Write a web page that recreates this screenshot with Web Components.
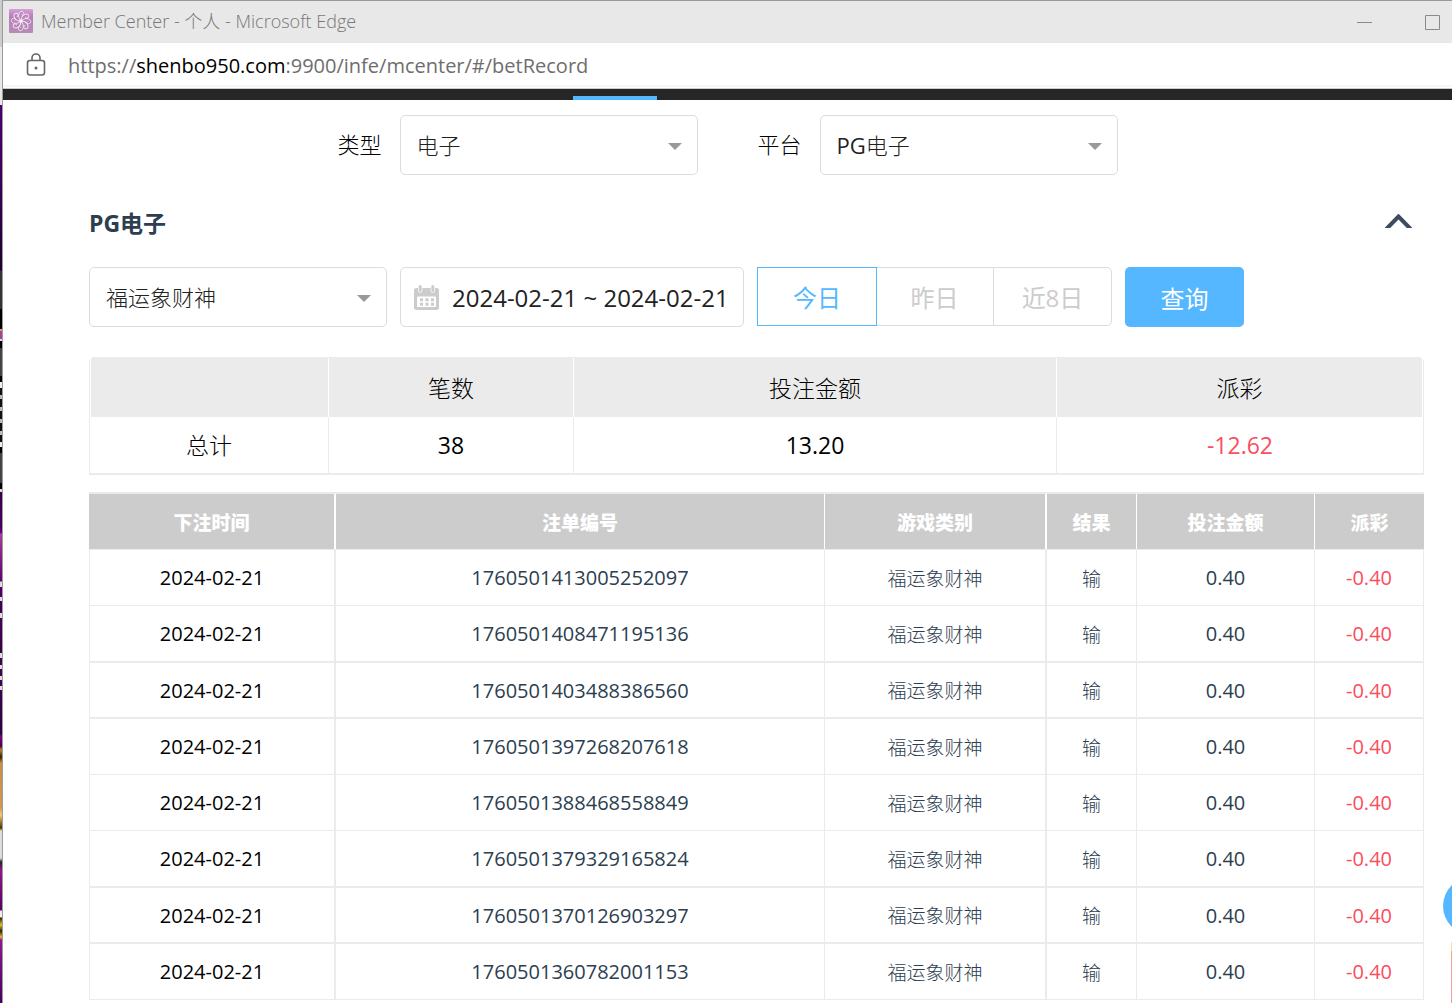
<!DOCTYPE html>
<html lang="zh-CN">
<head>
<meta charset="utf-8">
<title>Member Center</title>
<style>
    html, body {
        margin: 0;
        height: 100%;
        overflow: hidden;
    }
    body {
        font-family: "Open Sans", "Noto Sans CJK SC", sans-serif;
        color: #2c3e50;
        background: #fff;
        --blue: #54b7ff;
        --line: #dcdcdc;
        --cell: #ebebeb;
        --red: #fb4d5d;
        --thin: "Open Sans", "Noto Sans CJK SC Light", "Noto Sans CJK SC", sans-serif;
    }
</style>
</head>
<body>
<app-window>
    <title-bar slot="top">Member Center - 个人 - Microsoft Edge</title-bar>
    <address-bar slot="top" scheme="https://" host="shenbo950.com" path=":9900/infe/mcenter/#/betRecord"></address-bar>
    <nav-strip slot="top"></nav-strip>
    <filter-row align="center" gap="wide">
        <select-field label="类型" value="电子"></select-field>
        <select-field label="平台" value="PG电子"></select-field>
    </filter-row>
    <collapse-panel>
        <span slot="title">PG电子</span>
        <filter-row>
            <select-field value="福运象财神" name="游戏"></select-field>
            <date-range value="2024-02-21 ~ 2024-02-21"></date-range>
            <day-tabs days="今日,昨日,近8日"></day-tabs>
            <query-button>查询</query-button>
        </filter-row>
        <summary-table count="38" bet="13.20" payout="-12.62"></summary-table>
        <bet-table></bet-table>
    </collapse-panel>
    <float-service slot="float"></float-service>
</app-window>

<script>
class AppWindow extends HTMLElement {
    constructor() {
        super();
        const shadowRoot = this.attachShadow({ mode: 'open' });
        shadowRoot.innerHTML = `
        <style>
            :host {
                display: flex;
                position: relative;
                height: 100%;
                overflow: hidden;
            }
            .desktop {
                flex: none;
                width: 2px;
                background: linear-gradient(
                    #ccc 0 47px, #e8e8e8 47px 105px, #4b0070 105px, #3c0058 180px, #1c0030 270px,
                    #333 271px 309px, #000 309px 329px, #d8a060 329px 331px, #a84098 331px 339px, #ddd 339px 341px,
                    #000 341px 348px, #444 348px 376px, #000 376px 382px, #eee 382px 388px,
                    #111 388px 395px, #bbb 395px 399px, #111 399px 407px, #bbb 407px 411px, #111 411px 419px,
                    #bbb 419px 423px, #111 423px 431px, #bbb 431px 435px, #111 435px 442px, #eee 442px 447px,
                    #000 447px 453px, #444 453px 483px, #000 483px 489px, #ddd 489px 492px,
                    #380048 492px, #480060 528px, #700090 533px, #a84098 534px, #600070 581px,
                    #ddd 582px 587px, #500060 587px 597px, #ddd 597px 601px, #400050 601px 613px, #ddd 613px 618px,
                    #480058 618px, #380048 653px, #ddd 653px 658px, #400050 658px 665px, #ddd 665px 669px,
                    #400050 669px 676px, #ddd 676px 680px, #400050 680px 686px, #ddd 686px 690px,
                    #400050 690px, #300040 734px, #800080 736px, #480050 746px, #c08030 750px, #302000 757px,
                    #c89040 763px, #d09850 808px, #eed070 815px, #503000 828px, #ddd 831px 858px, #222 862px,
                    #901888 870px, #580060 910px, #eee 911px 917px, #302000 918px, #e0c030 925px, #302000 931px,
                    #e0c030 937px, #901888 940px, #480060 100%);
            }
            .window {
                flex: 1;
                min-width: 0;
                border-top: 1px solid #9a9a9a;
                border-left: 1px solid #9a9a9a;
                background: #fff;
            }
            main {
                padding: 15px 28px 0 86px;
            }
            ::slotted(filter-row) {
                margin: 0 -28px 0 -86px;
            }
        </style>
        <div class="desktop"></div>
        <div class="window">
            <slot name="top"></slot>
            <main><slot></slot></main>
        </div>
        <slot name="float"></slot>
        `
    }
}

class TitleBar extends HTMLElement {
    constructor() {
        super();
        const shadowRoot = this.attachShadow({ mode: 'open' });
        shadowRoot.innerHTML = `
        <style>
            :host {
                display: flex;
                align-items: center;
                height: 42px;
                padding-left: 6px;
                margin-right: -14px;
                background: #e8e8e8;
                color: #8a8a8a;
                font-size: 18px;
            }
            .logo { width: 24px; height: 24px; margin: 0 8px 2px 0; }
            .title { flex: 1; padding-bottom: 4px; font-weight: 300; color: #777; }
            button {
                display: flex;
                align-items: center;
                justify-content: center;
                width: 68px;
                height: 42px;
                padding: 0;
                border: 0;
                background: none;
                color: inherit;
            }
        </style>
        <svg class="logo" viewBox="0 0 24 24" aria-hidden="true">
            <defs>
                <linearGradient id="g" x1="0" y1="0" x2="0" y2="1">
                    <stop offset="0" stop-color="#d8a0d8"/>
                    <stop offset=".3" stop-color="#b880bc"/>
                    <stop offset="1" stop-color="#b48cb4"/>
                </linearGradient>
            </defs>
            <rect width="24" height="24" rx="1" fill="url(#g)"/>
            <g fill="none" stroke="#f2e4f2" stroke-width="1" class="petals"></g>
            <circle cx="12" cy="12" r="1.6" fill="#fff"/>
        </svg>
        <span class="title"><slot></slot></span>
        <button aria-label="最小化"><svg width="15" height="15"><path d="M0 7.5h15" stroke="currentColor"/></svg></button>
        <button aria-label="最大化"><svg width="15" height="15"><path d="M.5.5h14v14H.5z" fill="none" stroke="currentColor"/></svg></button>
        `
        let petals = '';
        for (let i = 0; i < 8; i++) {
            petals += `<path transform="rotate(${i * 45} 12 12)" d="M12 12C9.5 9.5 9 6 10.5 3.5C12.5 1 15.5 3 14.5 5.5C14 6.8 12.5 6.5 12.6 5.4"/>`;
        }
        shadowRoot.querySelector('.petals').innerHTML = petals;
    }
}

class AddressBar extends HTMLElement {
    constructor() {
        super();
        const shadowRoot = this.attachShadow({ mode: 'open' });
        shadowRoot.innerHTML = `
        <style>
            :host {
                display: flex;
                align-items: center;
                box-sizing: border-box;
                height: 46px;
                padding-left: 23px;
                border-bottom: 1px solid #ccc;
                background: linear-gradient(#fff 42px, #f7f7f7 42px 44px, #fff 44px);
                color: #6e6e6e;
                font-size: 20px;
            }
            svg { margin: 0 22px 2px 0; }
            b { font-weight: 400; color: #000; }
        </style>
        <svg width="20" height="24" viewBox="0 0 20 24" fill="none" stroke="#666" stroke-width="1.6" aria-hidden="true">
            <rect x="1.5" y="7.5" width="17" height="14.5" rx="2.5"/>
            <path d="M6 7.5V5a4 4 0 0 1 8 0v2.5"/>
            <circle cx="10" cy="15" r="1.5" fill="#666" stroke="none"/>
        </svg>
        <span>${this.getAttribute('scheme')}<b>${this.getAttribute('host')}</b>${this.getAttribute('path')}</span>
        `
    }
}

class NavStrip extends HTMLElement {
    constructor() {
        super();
        const shadowRoot = this.attachShadow({ mode: 'open' });
        shadowRoot.innerHTML = `
        <style>
            :host {
                display: flex;
                align-items: flex-end;
                height: 11px;
                background: #262626;
            }
            i {
                width: 84px;
                height: 4px;
                margin-left: 570px;
                background: var(--blue);
            }
        </style>
        <i></i>
        `
    }
}

class FilterRow extends HTMLElement {
    constructor() {
        super();
        const shadowRoot = this.attachShadow({ mode: 'open' });
        shadowRoot.innerHTML = `
        <style>
            :host { display: flex; gap: 13px; }
            :host([align=center]) { justify-content: center; }
            :host([gap=wide]) { gap: 60px; }
        </style>
        <slot></slot>
        `
    }
}

class SelectField extends HTMLElement {
    constructor() {
        super();
        const label = this.getAttribute('label');
        const value = this.getAttribute('value');
        const shadowRoot = this.attachShadow({ mode: 'open' });
        shadowRoot.innerHTML = `
        <style>
            :host {
                display: flex;
                align-items: center;
                gap: 18px;
                color: #222;
                font-family: var(--thin);
                font-size: 22px;
            }
            label { padding-bottom: 4px; color: #000; }
            .box { position: relative; }
            .box::after {
                content: "";
                position: absolute;
                right: 16px;
                top: 28px;
                border: solid transparent;
                border-width: 7px 7px 0;
                border-top-color: #999;
                pointer-events: none;
            }
            select {
                appearance: none;
                display: block;
                width: 298px;
                height: 60px;
                padding: 0 16px;
                border: 1px solid var(--line);
                border-radius: 5px;
                background: #fff;
                color: inherit;
                font: inherit;
            }
        </style>
        ${label ? `<label for="s">${label}</label>` : ''}
        <div class="box">
            <select id="s" ${label ? '' : `aria-label="${this.getAttribute('name')}"`}><option>${value}</option></select>
        </div>
        `
    }
}

class CollapsePanel extends HTMLElement {
    constructor() {
        super();
        const shadowRoot = this.attachShadow({ mode: 'open' });
        shadowRoot.innerHTML = `
        <style>
            :host { display: block; }
            header {
                display: flex;
                align-items: center;
                justify-content: space-between;
                height: 32px;
                padding: 32px 12px 28px 0;
            }
            h2 { margin: 0; font-size: 23px; line-height: 32px; font-weight: 700; }
            button {
                border: 0;
                padding: 0 0 4px;
                background: none;
                color: #3a4c5e;
            }
            svg { display: block; }
        </style>
        <header>
            <h2><slot name="title"></slot></h2>
            <button aria-label="收起">
                <svg width="27" height="14" viewBox="0 0 27 14"><path d="M0 16.5L13.5 2.5L27 16.5" fill="none" stroke="currentColor" stroke-width="4"/></svg>
            </button>
        </header>
        <slot></slot>
        `
        shadowRoot.querySelector('button').addEventListener('click', () => {
            const body = shadowRoot.querySelector('slot:not([name])');
            body.hidden = !body.hidden;
        });
    }
}

class DateRange extends HTMLElement {
    constructor() {
        super();
        const shadowRoot = this.attachShadow({ mode: 'open' });
        shadowRoot.innerHTML = `
        <style>
            :host { display: block; }
            label {
                display: flex;
                align-items: center;
                gap: 13px;
                box-sizing: border-box;
                width: 344px;
                height: 60px;
                padding-left: 13px;
                border: 1px solid var(--line);
                border-radius: 5px;
            }
            svg { flex: none; }
            input {
                flex: 1;
                min-width: 0;
                border: 0;
                padding: 0;
                background: none;
                color: #222;
                font: inherit;
                font-size: 24px;
            }
        </style>
        <label>
            <svg width="25" height="25" viewBox="0 0 25 25" aria-hidden="true">
                <path fill="#ccc" d="M2.5 3H4v2.500a2.200 2.200 0 0 0 4.400 0V3h8.200v2.500a2.200 2.200 0 0 0 4.400 0V3h1.500a2.500 2.500 0 0 1 2.500 2.500v17a2.500 2.500 0 0 1-2.500 2.500h-20A2.500 2.500 0 0 1 0 22.500v-17A2.500 2.500 0 0 1 2.500 3z"/>
                <rect x="3" y="11.5" width="19" height="10.5" rx="1" fill="#fff"/>
                <path stroke="#ccc" stroke-width="3" stroke-linecap="round" d="M6.200 1.600v3.800M18.800 1.600v3.800"/>
                <path stroke="#ccc" stroke-width="3" stroke-dasharray="3 2.500" d="M6 14.800h14M6 19.300h14"/>
            </svg>
            <input type="text" aria-label="日期" readonly value="${this.getAttribute('value')}">
        </label>
        `
    }
}

class DayTabs extends HTMLElement {
    constructor() {
        super();
        const shadowRoot = this.attachShadow({ mode: 'open' });
        const days = this.getAttribute('days').split(',');
        shadowRoot.innerHTML = `
        <style>
            :host { display: flex; height: 59px; }
            button {
                box-sizing: border-box;
                width: 119px;
                margin-right: -1px;
                padding: 0;
                border: 1px solid var(--line);
                background: #fff;
                color: #ccc;
                font: inherit;
                font-size: 24px;
            }
            button:first-child { border-radius: 5px 0 0 5px; }
            button:last-child { border-radius: 0 5px 5px 0; margin-right: 0; }
            button.on {
                z-index: 1;
                width: 120px;
                margin-right: -2px;
                border: 1px solid var(--blue);
                color: var(--blue);
            }
        </style>
        ${days.map((day, i) => `<button${i ? '' : ' class="on"'}>${day}</button>`).join('')}
        `
    }
}

class QueryButton extends HTMLElement {
    constructor() {
        super();
        const shadowRoot = this.attachShadow({ mode: 'open' });
        shadowRoot.innerHTML = `
        <style>
            :host { display: block; }
            button {
                width: 119px;
                height: 60px;
                padding: 0;
                border: 0;
                border-radius: 5px;
                background: var(--blue);
                color: #fff;
                font: inherit;
                font-size: 24px;
            }
        </style>
        <button><slot></slot></button>
        `
    }
}

class SummaryTable extends HTMLElement {
    constructor() {
        super();
        const shadowRoot = this.attachShadow({ mode: 'open' });
        shadowRoot.innerHTML = `
        <style>
            :host { display: block; margin: 30px 0 17px; }
            table {
                width: 100%;
                table-layout: fixed;
                border-spacing: 0;
                border: 1px solid var(--cell);
                border-bottom-width: 2px;
                border-radius: 5px 5px 0 0;
                color: #000;
                font-family: var(--thin);
                font-size: 23px;
                text-align: center;
            }
            th, td { padding: 0; font-weight: 400; line-height: 30px; }
            th { height: 59px; background: var(--cell); border-right: 1px solid #fff; }
            th:first-child { border-left: 1px solid #fff; }
            td { height: 56px; border-right: 1px solid var(--cell); }
            td:last-child { border-right: 0; }
            .minus { color: var(--red); }
        </style>
        <table>
            <colgroup><col width="239"><col width="245"><col width="483"><col width="366"></colgroup>
            <thead><tr><th></th><th>笔数</th><th>投注金额</th><th>派彩</th></tr></thead>
            <tbody><tr>
                <td>总计</td>
                <td>${this.getAttribute('count')}</td>
                <td>${this.getAttribute('bet')}</td>
                <td class="minus">${this.getAttribute('payout')}</td>
            </tr></tbody>
        </table>
        `
    }
}

const records = [
    '1760501413005252097',
    '1760501408471195136',
    '1760501403488386560',
    '1760501397268207618',
    '1760501388468558849',
    '1760501379329165824',
    '1760501370126903297',
    '1760501360782001153'
];

class BetTable extends HTMLElement {
    constructor() {
        super();
        const shadowRoot = this.attachShadow({ mode: 'open' });
        shadowRoot.innerHTML = `
        <style>
            :host { display: block; }
            table {
                width: 100%;
                table-layout: fixed;
                border-spacing: 0;
                border-top: 2px solid var(--cell);
                font-size: 20px;
                text-align: center;
            }
            th, td { box-sizing: border-box; padding: 0; border-right: 1px solid var(--cell); }
            th {
                height: 55px;
                background: #ccc;
                border-right-color: #fff;
                color: #fff;
                font-size: 19px;
                font-weight: 900;
            }
            td { height: 56px; border-bottom: 1px solid var(--cell); }
            tbody tr:first-child td { border-top: 1px solid var(--cell); height: 57px; }
            tr:nth-child(4n+2) td { border-bottom-width: 2px; height: 57px; }
            tr:nth-child(4n+3) td { border-bottom-width: 2px; }
            :is(th, td):is(:nth-child(1), :nth-child(3)) { border-right-width: 2px; }
            th:last-child { border-right: 0; }
            td:first-child { border-left: 1px solid var(--cell); color: #000; }
            .zh { font-family: var(--thin); font-size: 19px; }
            .minus { color: var(--red); }
        </style>
        <table>
            <colgroup><col width="247"><col width="489"><col width="222"><col width="90"><col width="178"><col width="109"></colgroup>
            <thead><tr><th>下注时间</th><th>注单编号</th><th>游戏类别</th><th>结果</th><th>投注金额</th><th>派彩</th></tr></thead>
            <tbody>
            ${records.map(id => `<tr>
                <td>2024-02-21</td>
                <td>${id}</td>
                <td class="zh">福运象财神</td>
                <td class="zh">输</td>
                <td>0.40</td>
                <td class="minus">-0.40</td>
            </tr>`).join('')}
            </tbody>
        </table>
        `
    }
}

class FloatService extends HTMLElement {
    constructor() {
        super();
        const shadowRoot = this.attachShadow({ mode: 'open' });
        shadowRoot.innerHTML = `
        <style>
            :host {
                position: absolute;
                right: -49px;
                bottom: 0;
                width: 58px;
            }
            button {
                display: block;
                width: 58px;
                height: 58px;
                padding: 0;
                border: 0;
                border-radius: 50%;
                background: var(--blue);
            }
            .card {
                height: 61px;
                margin: 7px 0 0 8px;
                background: linear-gradient(#f8e0a0 9px, #f0a098 9px);
            }
        </style>
        <button aria-label="客服"></button>
        <div class="card"></div>
        `
    }
}

customElements.define('app-window', AppWindow);
customElements.define('title-bar', TitleBar);
customElements.define('address-bar', AddressBar);
customElements.define('nav-strip', NavStrip);
customElements.define('filter-row', FilterRow);
customElements.define('select-field', SelectField);
customElements.define('collapse-panel', CollapsePanel);
customElements.define('date-range', DateRange);
customElements.define('day-tabs', DayTabs);
customElements.define('query-button', QueryButton);
customElements.define('summary-table', SummaryTable);
customElements.define('bet-table', BetTable);
customElements.define('float-service', FloatService);
</script>
</body>
</html>
